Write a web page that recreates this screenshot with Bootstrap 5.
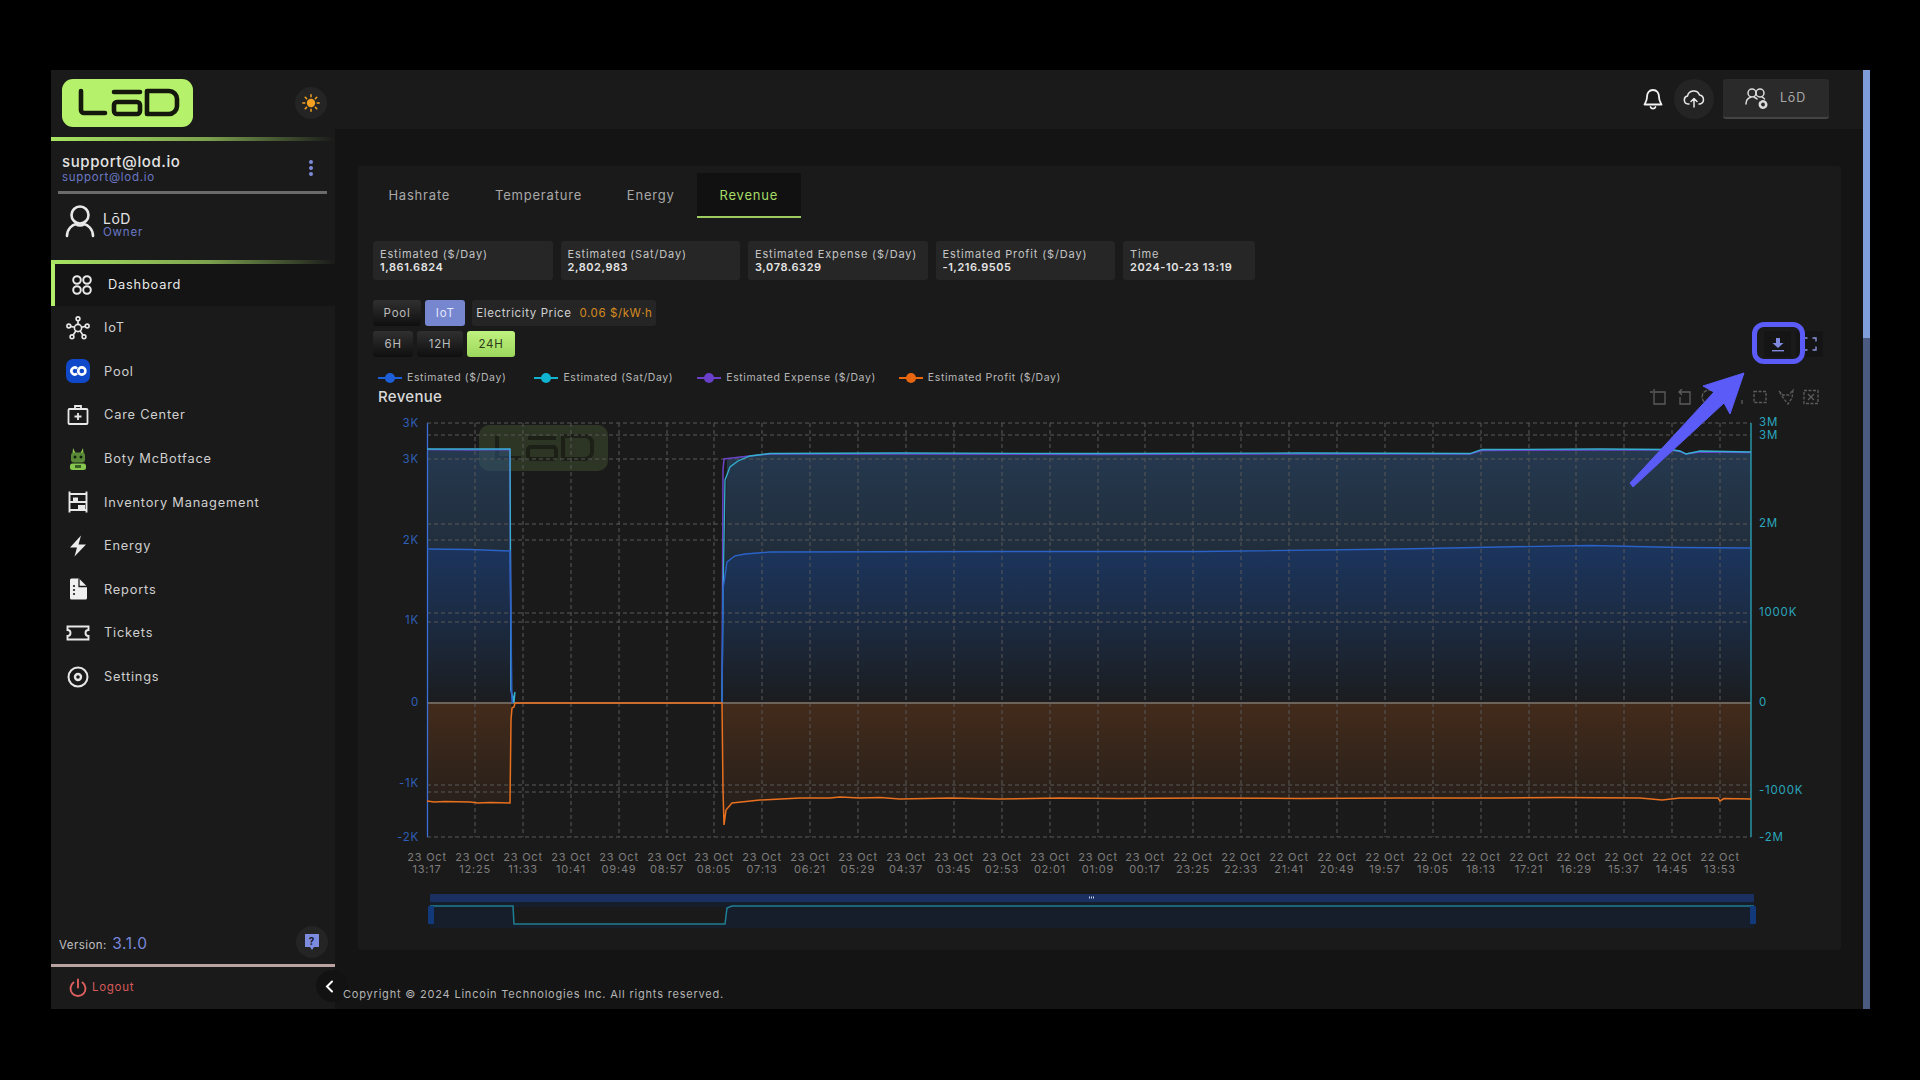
<!DOCTYPE html>
<html lang="en">
<head>
<meta charset="utf-8">
<title>LōD Revenue</title>
<link href="https://cdn.jsdelivr.net/npm/bootstrap@5.3.0/dist/css/bootstrap.min.css" rel="stylesheet">
<style>
html,body{height:100%}
body{background:#000;margin:0;padding:70px 50px 71px 51px;font-family:Inter,"Liberation Sans",sans-serif;color:#d8d8d8;letter-spacing:.8px;overflow:hidden}
.app-frame{height:939px;background:#141414}
.side-panel{width:284px;background:#1a1a1a;flex:none;position:relative}
.brand-row{height:67px;padding:9px 8px 0 11px}
.logo-mark{width:131px;height:48px;display:block}
.round-btn{width:32px;height:32px;border-radius:50%;background:#242424}
.sun-btn{margin-top:8px}
.lime-rule{height:4px;background:linear-gradient(90deg,#a8e562 0,#7da24e 55%,#4a5c34 78%,#1a1a1a 100%)}
.profile-row{height:50px;padding:11px 20px 0 11px}
.profile-name{font-size:15px;line-height:19px;color:#e4e4e4;letter-spacing:.6px;font-weight:500}
.profile-mail{font-size:11.5px;line-height:13px;color:#6a78c4;letter-spacing:.7px}
.kebab-dots{margin-top:7px}
.gray-rule{height:3px;background:#6b6b6b;margin:0 8px 0 7px}
.user-row{height:66px;padding:10px 0 0 14px;gap:8px}
.user-text{padding-top:7px}
.user-name{font-size:14px;line-height:15px;letter-spacing:.5px;color:#e4e4e4}
.user-role{font-size:11.5px;line-height:13px;color:#6a78c4}
.side-link{height:43.6px;padding-left:15px;color:#cfcfcf;font-size:12.8px;text-decoration:none}
.side-link:hover{color:#fff}
.side-link svg{flex:none;width:24px;height:24px;margin-right:14px}
.side-link.is-active{height:42px;background:#141414;border-left:4px solid #b4ef6c;padding-left:15px;color:#e8e8e8}
.version-row{height:38px;padding:0 7px 7px 8px}
.version-label{font-size:11.5px;color:#c0c0c0;letter-spacing:.45px}
.version-num{font-size:15.5px;color:#7888dc;letter-spacing:.6px}
.pink-rule{height:3px;background:#b9a2a2}
.logout-row{height:42px;padding-left:18px;color:#d85a5a;font-size:11.5px;letter-spacing:.7px}
.logout-row svg{margin-right:5px}
.collapse-btn{position:absolute;right:-13px;bottom:7px;width:32px;height:32px;border-radius:50%;background:#121212;color:#fff;padding-left:9px}
.main-col{min-width:0}
.top-bar{height:59px;background:#1a1a1a;padding:0 34px 2px 0}
.bell-wrap{margin-right:11px}
.cloud-btn{width:40px;height:40px;border-radius:50%;background:#242424;margin-right:9px}
.account-box{width:106px;height:40px;background:#2a2a2a;border-bottom:2px solid #444;border-radius:3px;padding-left:22px;gap:11px;font-size:12.5px;color:#a8a8a8;margin-top:1px}
.content-zone{padding:37px 22px 0 23px}
.panel-main{background:#1a1a1a;height:784px;border-radius:3px;padding-top:7px}
.tab-strip{padding-left:8px;height:45px}
.tab-item{padding:0 22.4px;line-height:45px;height:45px;color:#a8a8a8;font-size:13px;text-decoration:none;border-bottom:2px solid transparent;letter-spacing:.8px}
.tab-item.is-on{background:#111;color:#a6dc66;border-bottom-color:#9ccb60}
.stat-strip{padding:23px 15px 0;gap:8px}
.stat-box{width:179.5px;height:39px;background:#262626;border-radius:3px;padding:7px 7px 0;font-size:11px;line-height:13px;color:#c4c4c4;letter-spacing:.85px}
.stat-box b{display:block;font-weight:600;color:#e4e4e4;letter-spacing:.55px}
.stat-time{width:132px}
.ctrl-row{padding:20px 15px 0;gap:4px}
.ctrl-row2{padding:5px 18px 0 15px;gap:4px}
.seg-btn{height:26px;padding:0 10.6px;border-radius:3px;border:0;background:linear-gradient(#303030,#0f0f0f);color:#bcbcbc;font-size:11.5px;line-height:26px;letter-spacing:.8px}
.ctrl-row2 .seg-btn{padding:0 11.5px}
.seg-btn.is-blue{background:#7686cf;color:#e4e8ff}
.seg-btn.is-lime{background:linear-gradient(#bff27f,#9cd75c);color:#2c3a18}
.price-box{height:26px;margin-left:3px;padding:0 4px;background:#252525;border-radius:3px;font-size:11.5px;line-height:26px;color:#d0d0d0;letter-spacing:.6px;white-space:nowrap}
.price-val{color:#d58a20;margin-left:4px}
.tool-pair{gap:5px}
.tool-cell{width:27px;height:26px;background:#151515}
.legend-row{padding:11px 20px 0;height:30px;gap:23px;font-size:10.5px;color:#b8b8b8;letter-spacing:.6px}
.legend-row>div:first-child{margin-right:5px}
.legend-row>div:nth-child(2){margin-right:1px}
.legend-mark{width:24px;height:10px;margin-right:5px;flex:none}
.title-row{padding:0 22px 0 20px;height:22px;margin-top:-1px}
.chart-title{font-size:15px;line-height:22px;color:#d8d8d8;font-weight:500;letter-spacing:.3px}
.tool-icons{gap:9.5px}
.chart-svg{display:block;width:1452px;height:525px;margin:2px 0 0 15px;font-family:Inter,"Liberation Sans",sans-serif;letter-spacing:.8px}
.copy-line{font-size:11px;color:#b4b4b4;padding:36px 0 0 8px;white-space:nowrap;margin-left:-23px;position:relative;letter-spacing:.8px}
.scroll-rail{width:7px;flex:none;background:#4a5a80}
.scroll-thumb{height:268px;background:#7d9ed8}
.note-ring{position:absolute;left:1752px;top:322px;width:53px;height:42px;border:5px solid #5b5bf8;border-radius:12px;pointer-events:none}
.note-arrow{position:absolute;left:1620px;top:360px;width:140px;height:135px;pointer-events:none}
</style>
</head>
<body>
<div class="app-frame d-flex">
  <aside class="side-panel d-flex flex-column">
    <div class="brand-row d-flex justify-content-between align-items-start">
      <svg class="logo-mark" viewBox="0 0 131 48" role="img" aria-label="LōD logo">
        <rect width="131" height="48" rx="11" fill="#b6f16b"/>
        <g fill="none" stroke="#14180c" stroke-width="4.600" stroke-linecap="round" stroke-linejoin="round">
          <path d="M19 12V31a3 3 0 0 0 3 3H43"/>
          <line x1="52" y1="13" x2="78" y2="13"/>
          <rect x="52" y="23" width="26" height="12" rx="3"/>
          <path d="M85 12H107a8 8 0 0 1 8 8V27a8 8 0 0 1-8 8H85Z"/>
        </g>
      </svg>
      <div class="round-btn sun-btn d-flex align-items-center justify-content-center">
        <svg width="18" height="18" viewBox="0 0 18 18"><circle cx="9" cy="9" r="4.200" fill="#f59f23"/><g stroke="#f59f23" stroke-width="1.500" stroke-linecap="round"><path d="M9 .8v2M9 15.200v2M.8 9h2M15.200 9h2M3.200 3.200l1.400 1.400M13.400 13.400l1.400 1.400M3.200 14.800l1.400-1.400M13.400 4.600l1.400-1.400"/></g></svg>
      </div>
    </div>
    <div class="lime-rule"></div>
    <div class="profile-row d-flex justify-content-between">
      <div>
        <div class="profile-name">support@lod.io</div>
        <div class="profile-mail">support@lod.io</div>
      </div>
      <svg class="kebab-dots" width="8" height="18" viewBox="0 0 8 18"><g fill="#7d8bd8"><circle cx="4" cy="3" r="2"/><circle cx="4" cy="9" r="2"/><circle cx="4" cy="15" r="2"/></g></svg>
    </div>
    <div class="gray-rule"></div>
    <div class="user-row d-flex align-items-start">
      <svg width="30" height="34" viewBox="0 0 30 34" fill="none" stroke="#e8e8e8" stroke-width="2.600" stroke-linecap="round"><circle cx="15" cy="11" r="8.500"/><path d="M2 32c0-7 5-11 9-12M28 32c0-7-5-11-9-12"/><path d="M11 20c2 2 6 2 8 0"/></svg>
      <div class="user-text">
        <div class="user-name">LōD</div>
        <div class="user-role">Owner</div>
      </div>
    </div>
    <div class="lime-rule"></div>
    <nav class="d-flex flex-column">
      <a class="side-link is-active d-flex align-items-center" href="#">
        <svg viewBox="0 0 24 24" fill="none" stroke="#e8e8e8" stroke-width="2"><circle cx="7" cy="7" r="3.800"/><circle cx="17" cy="7" r="3.800"/><circle cx="7" cy="17" r="3.800"/><circle cx="17" cy="17" r="3.800"/></svg>Dashboard</a>
      <a class="side-link d-flex align-items-center" href="#">
        <svg viewBox="0 0 24 24" fill="none" stroke="#e8e8e8" stroke-width="1.600"><circle cx="12" cy="12" r="3.600"/><circle cx="12" cy="2.800" r="1.900"/><circle cx="2.800" cy="10" r="1.900"/><circle cx="21.200" cy="10" r="1.900"/><circle cx="6" cy="20.800" r="1.900"/><circle cx="18" cy="20.800" r="1.900"/><path d="M12 4.700v3.700M4.700 10.400l3.800 .8M19.300 10.400l-3.800 .8M7 19.200l2.800-4.200M17 19.200l-2.800-4.200"/></svg>IoT</a>
      <a class="side-link d-flex align-items-center" href="#">
        <svg viewBox="0 0 24 24"><rect width="24" height="24" rx="7" fill="#0f48c8"/><g fill="none" stroke="#fff" stroke-width="2.600"><path d="M11 9.400a3.400 3.400 0 1 0 0 5.200"/><circle cx="15.800" cy="12" r="3.600"/></g></svg>Pool</a>
      <a class="side-link d-flex align-items-center" href="#">
        <svg viewBox="0 0 24 24" fill="none" stroke="#e8e8e8" stroke-width="1.800"><rect x="2.500" y="6" width="19" height="15" rx="1"/><path d="M9 6V3h6v3M12 10v7M8.500 13.500h7"/></svg>Care Center</a>
      <a class="side-link d-flex align-items-center" href="#">
        <svg viewBox="0 0 24 24"><path d="M7 1l2.500 5h5L17 1l.5 6H6.500Z" fill="#8ccc50"/><rect x="5" y="5.500" width="14" height="10" rx="3" fill="#5a8a38"/><circle cx="9" cy="10" r="1.500" fill="#121"/><circle cx="15" cy="10" r="1.500" fill="#121"/><rect x="4" y="16.500" width="16" height="6.500" rx="2.500" fill="#86c84e"/><rect x="9" y="18" width="6" height="3" fill="#385c24"/></svg>Boty McBotface</a>
      <a class="side-link d-flex align-items-center" href="#">
        <svg viewBox="0 0 24 24" fill="none" stroke="#e8e8e8" stroke-width="1.900"><path d="M3.500 1.500V22.500M20.500 1.500V22.500M3.500 4h17M3.500 12h17M3.500 20h17"/><rect x="7" y="7.500" width="5" height="4.500" fill="#e8e8e8" stroke="none"/><rect x="12" y="15" width="7" height="5" fill="#e8e8e8" stroke="none"/></svg>Inventory Management</a>
      <a class="side-link d-flex align-items-center" href="#">
        <svg viewBox="0 0 24 24"><path d="M15 1.500 4 13.500h7L8.500 22.500 20 10.500h-7.500Z" fill="#ececec"/></svg>Energy</a>
      <a class="side-link d-flex align-items-center" href="#">
        <svg viewBox="0 0 24 24"><path d="M4 3a1.500 1.500 0 0 1 1.500-1.500H13L21 9.500V21a1.500 1.500 0 0 1-1.500 1.500h-14A1.500 1.500 0 0 1 4 21Z" fill="#f0f0f0"/><path d="M13 1.500V9.500H21" fill="none" stroke="#1a1a1a" stroke-width="1.300"/><g fill="#1a1a1a"><circle cx="8" cy="9" r="1.100"/><circle cx="8" cy="13" r="1.100"/><circle cx="8" cy="17" r="1.100"/></g></svg>Reports</a>
      <a class="side-link d-flex align-items-center" href="#">
        <svg viewBox="0 0 24 24" fill="none" stroke="#e8e8e8" stroke-width="1.900"><path d="M1.500 5.500h21v3.500a3 3 0 0 0 0 6v3.500h-21V15a3 3 0 0 0 0-6Z"/></svg>Tickets</a>
      <a class="side-link d-flex align-items-center" href="#">
        <svg viewBox="0 0 24 24" fill="none" stroke="#e8e8e8" stroke-width="2"><circle cx="12" cy="12" r="9.500"/><circle cx="12" cy="12" r="3" stroke-width="2.400"/></svg>Settings</a>
    </nav>
    <div class="flex-grow-1"></div>
    <div class="version-row d-flex align-items-center justify-content-between">
      <div class="pt-1"><span class="version-label">Version:</span> <span class="version-num">3.1.0</span></div>
      <div class="round-btn d-flex align-items-center justify-content-center">
        <svg width="14" height="18" viewBox="0 0 14 18"><path d="M0 1h14v13H9l-2 3-2-3H0Z" fill="#7d8bdf"/><text x="7" y="11.500" text-anchor="middle" font-size="10" font-weight="700" fill="#14182e" font-family="Inter,sans-serif">?</text></svg>
      </div>
    </div>
    <div class="pink-rule"></div>
    <div class="logout-row d-flex align-items-center">
      <svg width="18" height="20" viewBox="0 0 18 20" fill="none" stroke="#e05f5f" stroke-width="1.900" stroke-linecap="round"><path d="M9 1.500v8M4.500 4.500a7.500 7.500 0 1 0 9 0"/></svg>Logout
    </div>
    <div class="collapse-btn d-flex align-items-center justify-content-start">
      <svg width="9" height="13" viewBox="0 0 9 13" fill="none" stroke="#fff" stroke-width="2" stroke-linecap="round"><path d="M7 1.500 2 6.500l5 5"/></svg>
    </div>
  </aside>

  <main class="main-col flex-grow-1 d-flex flex-column">
    <div class="top-bar d-flex align-items-center justify-content-end">
      <div class="bell-wrap d-flex">
        <svg width="20" height="22" viewBox="0 0 20 22" fill="none" stroke="#f2f2f2" stroke-width="1.800" stroke-linejoin="round"><path d="M10 2c-4 0-6 3-6 7 0 4-2 6-2.500 7.500h17C18 15 16 13 16 9c0-4-2-7-6-7Z"/><path d="M7.500 19a2.700 2.700 0 0 0 5 0" stroke-linecap="round"/></svg>
      </div>
      <div class="cloud-btn d-flex align-items-center justify-content-center">
        <svg width="22" height="18" viewBox="0 0 22 18" fill="none" stroke="#e8e8e8" stroke-width="1.500" stroke-linecap="round" stroke-linejoin="round"><path d="M6 14H5a4 4 0 0 1-.5-7.900A6.300 6.300 0 0 1 16.500 5 4.600 4.600 0 0 1 17 14h-1"/><path d="M11 17V9M8 11.500l3-3 3 3"/></svg>
      </div>
      <div class="account-box d-flex align-items-center">
        <svg width="24" height="24" viewBox="0 0 24 24" fill="none" stroke="#dcdcdc" stroke-width="1.500" stroke-linecap="round"><circle cx="7" cy="7" r="4"/><circle cx="15" cy="7" r="4"/><path d="M1 18c0-4 2-6 5-7M12 13c-1-1-2-1.500-3-2M17 11c1 .5 2 1 2.500 2"/><circle cx="18" cy="18.500" r="3.200" stroke-width="2.600" stroke-dasharray="2 1.400"/></svg>
        <span>LōD</span>
      </div>
    </div>
    <div class="content-zone flex-grow-1">
      <section class="panel-main">
        <div class="tab-strip d-flex">
          <a class="tab-item" href="#">Hashrate</a>
          <a class="tab-item" href="#">Temperature</a>
          <a class="tab-item" href="#">Energy</a>
          <a class="tab-item is-on" href="#">Revenue</a>
        </div>
        <div class="stat-strip d-flex">
          <div class="stat-box">Estimated ($/Day)<b>1,861.6824</b></div>
          <div class="stat-box">Estimated (Sat/Day)<b>2,802,983</b></div>
          <div class="stat-box">Estimated Expense ($/Day)<b>3,078.6329</b></div>
          <div class="stat-box">Estimated Profit ($/Day)<b>-1,216.9505</b></div>
          <div class="stat-box stat-time">Time<b>2024-10-23 13:19</b></div>
        </div>
        <div class="ctrl-row d-flex">
          <button class="seg-btn" type="button">Pool</button>
          <button class="seg-btn is-blue" type="button">IoT</button>
          <div class="price-box">Electricity Price <span class="price-val">0.06 $/kW·h</span></div>
        </div>
        <div class="ctrl-row2 d-flex justify-content-between align-items-center">
          <div class="d-flex gap-1">
            <button class="seg-btn" type="button">6H</button>
            <button class="seg-btn" type="button">12H</button>
            <button class="seg-btn is-lime" type="button">24H</button>
          </div>
          <div class="tool-pair d-flex">
            <div class="tool-cell d-flex align-items-center justify-content-center">
              <svg width="14" height="15" viewBox="0 0 14 15" fill="#7f8ade"><path d="M5 1h4v5h3.500L7 11 1.500 6H5Z"/><rect x="1" y="13" width="12" height="1.400"/></svg>
            </div>
            <div class="tool-cell d-flex align-items-center justify-content-center">
              <svg width="14" height="14" viewBox="0 0 14 14" fill="none" stroke="#8a93d8" stroke-width="1.400"><path d="M1 4.500V1h3.500M9.500 1H13v3.500M13 9.500V13H9.500M4.500 13H1V9.500"/></svg>
            </div>
          </div>
        </div>
        <div class="legend-row d-flex align-items-center">
          <div class="d-flex align-items-center"><svg class="legend-mark" viewBox="0 0 24 10"><path d="M0 5h24" stroke="#1d5fd8" stroke-width="2"/><circle cx="12" cy="5" r="5" fill="#1d5fd8"/></svg>Estimated ($/Day)</div>
          <div class="d-flex align-items-center"><svg class="legend-mark" viewBox="0 0 24 10"><path d="M0 5h24" stroke="#11b4d0" stroke-width="2"/><circle cx="12" cy="5" r="5" fill="#11b4d0"/></svg>Estimated (Sat/Day)</div>
          <div class="d-flex align-items-center"><svg class="legend-mark" viewBox="0 0 24 10"><path d="M0 5h24" stroke="#6a3fc9" stroke-width="2"/><circle cx="12" cy="5" r="5" fill="#6a3fc9"/></svg>Estimated Expense ($/Day)</div>
          <div class="d-flex align-items-center"><svg class="legend-mark" viewBox="0 0 24 10"><path d="M0 5h24" stroke="#e8660f" stroke-width="2"/><circle cx="12" cy="5" r="5" fill="#e8660f"/></svg>Estimated Profit ($/Day)</div>
        </div>
        <div class="title-row d-flex justify-content-between align-items-center">
          <div class="chart-title">Revenue</div>
          <div class="tool-icons d-flex">
            <svg width="16" height="16" viewBox="0 0 16 16" fill="none" stroke="#5c5c5c" stroke-width="1.300"><path d="M0 3h3M4 0v3h11v12H4V3"/></svg>
            <svg width="16" height="16" viewBox="0 0 16 16" fill="none" stroke="#5c5c5c" stroke-width="1.300"><path d="M6 0 3 3l3 3M3 3h11v12H4V8"/></svg>
            <svg width="16" height="16" viewBox="0 0 16 16" fill="none" stroke="#5c5c5c" stroke-width="1.300" stroke-dasharray="4 1.200"><path d="M13 13A7 7 0 1 1 13 3"/></svg>
            <svg width="16" height="16" viewBox="0 0 16 16" fill="none" stroke="#5c5c5c" stroke-width="1.300"><path d="M2 2h4M15 15v-4"/></svg>
            <svg width="16" height="16" viewBox="0 0 16 16" fill="none" stroke="#5c5c5c" stroke-width="1.300" stroke-dasharray="3 1.500"><rect x="2" y="2.500" width="12" height="11"/></svg>
            <svg width="16" height="16" viewBox="0 0 16 16" fill="none" stroke="#5c5c5c" stroke-width="1.300" stroke-dasharray="3 1.500"><path d="M1 2l4 4 6 0 4-5-1 8-4 6-4-5Z"/></svg>
            <svg width="16" height="16" viewBox="0 0 16 16" fill="none" stroke="#5c5c5c" stroke-width="1.300"><rect x="1" y="1.500" width="14" height="13" stroke-dasharray="3 1.500"/><path d="M5 5l6 6M11 5l-6 6"/></svg>
          </div>
        </div>
        <svg class="chart-svg" viewBox="373 410 1452 525" role="img" aria-label="Revenue chart">
          <defs>
            <linearGradient id="fillSat" gradientUnits="userSpaceOnUse" x1="0" y1="449" x2="0" y2="703"><stop offset="0" stop-color="#2e527b" stop-opacity=".55"/><stop offset="1" stop-color="#2e527b" stop-opacity=".03"/></linearGradient>
            <linearGradient id="fillEst" gradientUnits="userSpaceOnUse" x1="0" y1="549" x2="0" y2="703"><stop offset="0" stop-color="#0f46aa" stop-opacity=".3"/><stop offset="1" stop-color="#0f46aa" stop-opacity=".01"/></linearGradient>
            <linearGradient id="fillProfit" gradientUnits="userSpaceOnUse" x1="0" y1="703" x2="0" y2="800"><stop offset="0" stop-color="#e8701f" stop-opacity=".2"/><stop offset="1" stop-color="#e8701f" stop-opacity=".07"/></linearGradient>
          </defs>
          <g>
            <rect x="479" y="425" width="129" height="46" rx="10" fill="#b4f06a" fill-opacity=".13"/>
            <g fill="none" stroke="#1c2016" stroke-width="4" stroke-linejoin="round"><path d="M497 436V458H521"/><path d="M528 438H556"/><rect x="528" y="447" width="28" height="12" rx="3"/><path d="M563 436H585a7 7 0 0 1 7 7V452a7 7 0 0 1-7 7H563Z"/></g>
          </g>
          <path d="M427 703V449H510L513 703H722L724 600 727 460 745 456 770 453.500 1470 453.500 1482 449.500 1670 449.500 1686 453 1700 451 1751 452V703Z" fill="url(#fillSat)"/>
          <path d="M427 703V549L510 551 512 703H722L723 590 727 562 745 554 770 552 1000 551.500 1200 551.500 1400 549 1590 546 1680 548 1751 548V703Z" fill="url(#fillEst)"/>
          <path d="M427 703V801L510 803 511 703H722L724 825 726 810 732 803 760 800 800 798 1751 799V703Z" fill="url(#fillProfit)"/>
          <path d="M427 423H1751M427 435H1751M427 459H1751M427 524H1751M427 540H1751M427 613H1751M427 622H1751M427 785H1751M427 792H1751M427 837H1751" stroke="#585858" stroke-width="1" stroke-dasharray="4 3" fill="none"/>
          <path d="M475 423V837M523 423V837M571 423V837M619 423V837M667 423V837M714 423V837M762 423V837M810 423V837M858 423V837M906 423V837M954 423V837M1002 423V837M1050 423V837M1098 423V837M1145 423V837M1193 423V837M1241 423V837M1289 423V837M1337 423V837M1385 423V837M1433 423V837M1481 423V837M1529 423V837M1576 423V837M1624 423V837M1672 423V837M1720 423V837" stroke="#585858" stroke-width="1" stroke-dasharray="4 3" fill="none"/>
          <path d="M427 703H1751" stroke="#6e635a" stroke-width="2"/>
          <path d="M427.500 423V837" stroke="#3a6fd8" stroke-width="1.300"/>
          <path d="M1751 423V837" stroke="#2aa6bd" stroke-width="1.300"/>
          <path d="M427 449.500 470 450 510 449.500 511 690 513 703M722 703 723 470 724 459 745 456.500 770 454 900 454 1100 454.500 1300 454 1470 454 1482 450.500 1600 450 1670 450 1680 451.500 1686 454 1700 452 1751 452.500" fill="none" stroke="#6a44c8" stroke-width="1.500"/>
          <path d="M427 449 470 449 510 449 511 690 514 703M513 700 515 692 514 703M722 703 723 600 725 480 730 467 738 461 750 456 770 453.500 900 453 1100 453.500 1300 453 1470 453.500 1482 449.500 1600 449 1670 449.500 1680 451 1686 454 1700 451 1751 452" fill="none" stroke="#33b0d0" stroke-width="1.300"/>
          <path d="M427 549 470 549.500 510 551 512 703M722 703 723 590 727 562 735 556 745 554 770 552 1000 551.500 1200 551.500 1400 549 1500 547 1590 545.500 1680 547.500 1751 548" fill="none" stroke="#2a62c8" stroke-width="1.400"/>
          <path d="M427 801 434 802 445 801.500 470 802 478 803 490 802.500 510 803 511 720 512 708 514 707 515 703 722 703 723 790 724 825 726 810 732 803 760 800 800 798 830 798 840 797 860 798 880 797.500 900 799 950 798 1000 799 1060 798 1120 798.500 1200 798 1300 798.500 1400 798 1500 798 1560 797.500 1640 798 1662 800 1680 798 1718 798 1720 801 1724 798.500 1751 799" fill="none" stroke="#e8701f" stroke-width="1.500"/>
          <g font-size="11.500" fill="#2f5fb8" text-anchor="end">
            <text x="419" y="427">3K</text><text x="419" y="463">3K</text><text x="419" y="544">2K</text><text x="419" y="624">1K</text><text x="419" y="706">0</text><text x="419" y="787">-1K</text><text x="419" y="841">-2K</text>
          </g>
          <g font-size="11.500" fill="#2aa6bd">
            <text x="1759" y="426">3M</text><text x="1759" y="439">3M</text><text x="1759" y="527">2M</text><text x="1759" y="616">1000K</text><text x="1759" y="706">0</text><text x="1759" y="794">-1000K</text><text x="1759" y="841">-2M</text>
          </g>
          <g font-size="11" fill="#7e7e7e" text-anchor="middle">
            <text x="427" y="861">23 Oct</text><text x="427" y="873">13:17</text>
            <text x="475" y="861">23 Oct</text><text x="475" y="873">12:25</text>
            <text x="523" y="861">23 Oct</text><text x="523" y="873">11:33</text>
            <text x="571" y="861">23 Oct</text><text x="571" y="873">10:41</text>
            <text x="619" y="861">23 Oct</text><text x="619" y="873">09:49</text>
            <text x="667" y="861">23 Oct</text><text x="667" y="873">08:57</text>
            <text x="714" y="861">23 Oct</text><text x="714" y="873">08:05</text>
            <text x="762" y="861">23 Oct</text><text x="762" y="873">07:13</text>
            <text x="810" y="861">23 Oct</text><text x="810" y="873">06:21</text>
            <text x="858" y="861">23 Oct</text><text x="858" y="873">05:29</text>
            <text x="906" y="861">23 Oct</text><text x="906" y="873">04:37</text>
            <text x="954" y="861">23 Oct</text><text x="954" y="873">03:45</text>
            <text x="1002" y="861">23 Oct</text><text x="1002" y="873">02:53</text>
            <text x="1050" y="861">23 Oct</text><text x="1050" y="873">02:01</text>
            <text x="1098" y="861">23 Oct</text><text x="1098" y="873">01:09</text>
            <text x="1145" y="861">23 Oct</text><text x="1145" y="873">00:17</text>
            <text x="1193" y="861">22 Oct</text><text x="1193" y="873">23:25</text>
            <text x="1241" y="861">22 Oct</text><text x="1241" y="873">22:33</text>
            <text x="1289" y="861">22 Oct</text><text x="1289" y="873">21:41</text>
            <text x="1337" y="861">22 Oct</text><text x="1337" y="873">20:49</text>
            <text x="1385" y="861">22 Oct</text><text x="1385" y="873">19:57</text>
            <text x="1433" y="861">22 Oct</text><text x="1433" y="873">19:05</text>
            <text x="1481" y="861">22 Oct</text><text x="1481" y="873">18:13</text>
            <text x="1529" y="861">22 Oct</text><text x="1529" y="873">17:21</text>
            <text x="1576" y="861">22 Oct</text><text x="1576" y="873">16:29</text>
            <text x="1624" y="861">22 Oct</text><text x="1624" y="873">15:37</text>
            <text x="1672" y="861">22 Oct</text><text x="1672" y="873">14:45</text>
            <text x="1720" y="861">22 Oct</text><text x="1720" y="873">13:53</text>
          </g>
          <rect x="430" y="894" width="1324" height="8" rx="1" fill="#1a3060"/>
          <rect x="430" y="902" width="1324" height="26" fill="#161e2b"/>
          <rect x="514" y="907" width="211" height="18" fill="#1a1a1a"/>
          <path d="M430 906H513L514 924H725L727 908 732 906H1754" fill="none" stroke="#1f7e93" stroke-width="1.500"/>
          <rect x="428" y="906" width="6" height="18" rx="1" fill="#123a7a"/>
          <rect x="1750" y="906" width="6" height="18" rx="1" fill="#123a7a"/>
          <path d="M1089 897.500h6" stroke="#c8d4ee" stroke-width="2" stroke-dasharray="1 1"/>
        </svg>
      </section>
      <div class="copy-line">Copyright © 2024 Lincoin Technologies Inc. All rights reserved.</div>
    </div>
  </main>
  <div class="scroll-rail"><div class="scroll-thumb"></div></div>
</div>
<div class="note-ring"></div>
<svg class="note-arrow" viewBox="1620 360 140 135"><path d="M1744 373 1703 386 1714 392 1630 483 1633 487 1724 403 1730 414Z" fill="#5b5bf8" stroke="#5b5bf8" stroke-width="1" stroke-linejoin="round"/></svg>
<script src="https://cdn.jsdelivr.net/npm/bootstrap@5.3.0/dist/js/bootstrap.bundle.min.js"></script>
</body>
</html>
